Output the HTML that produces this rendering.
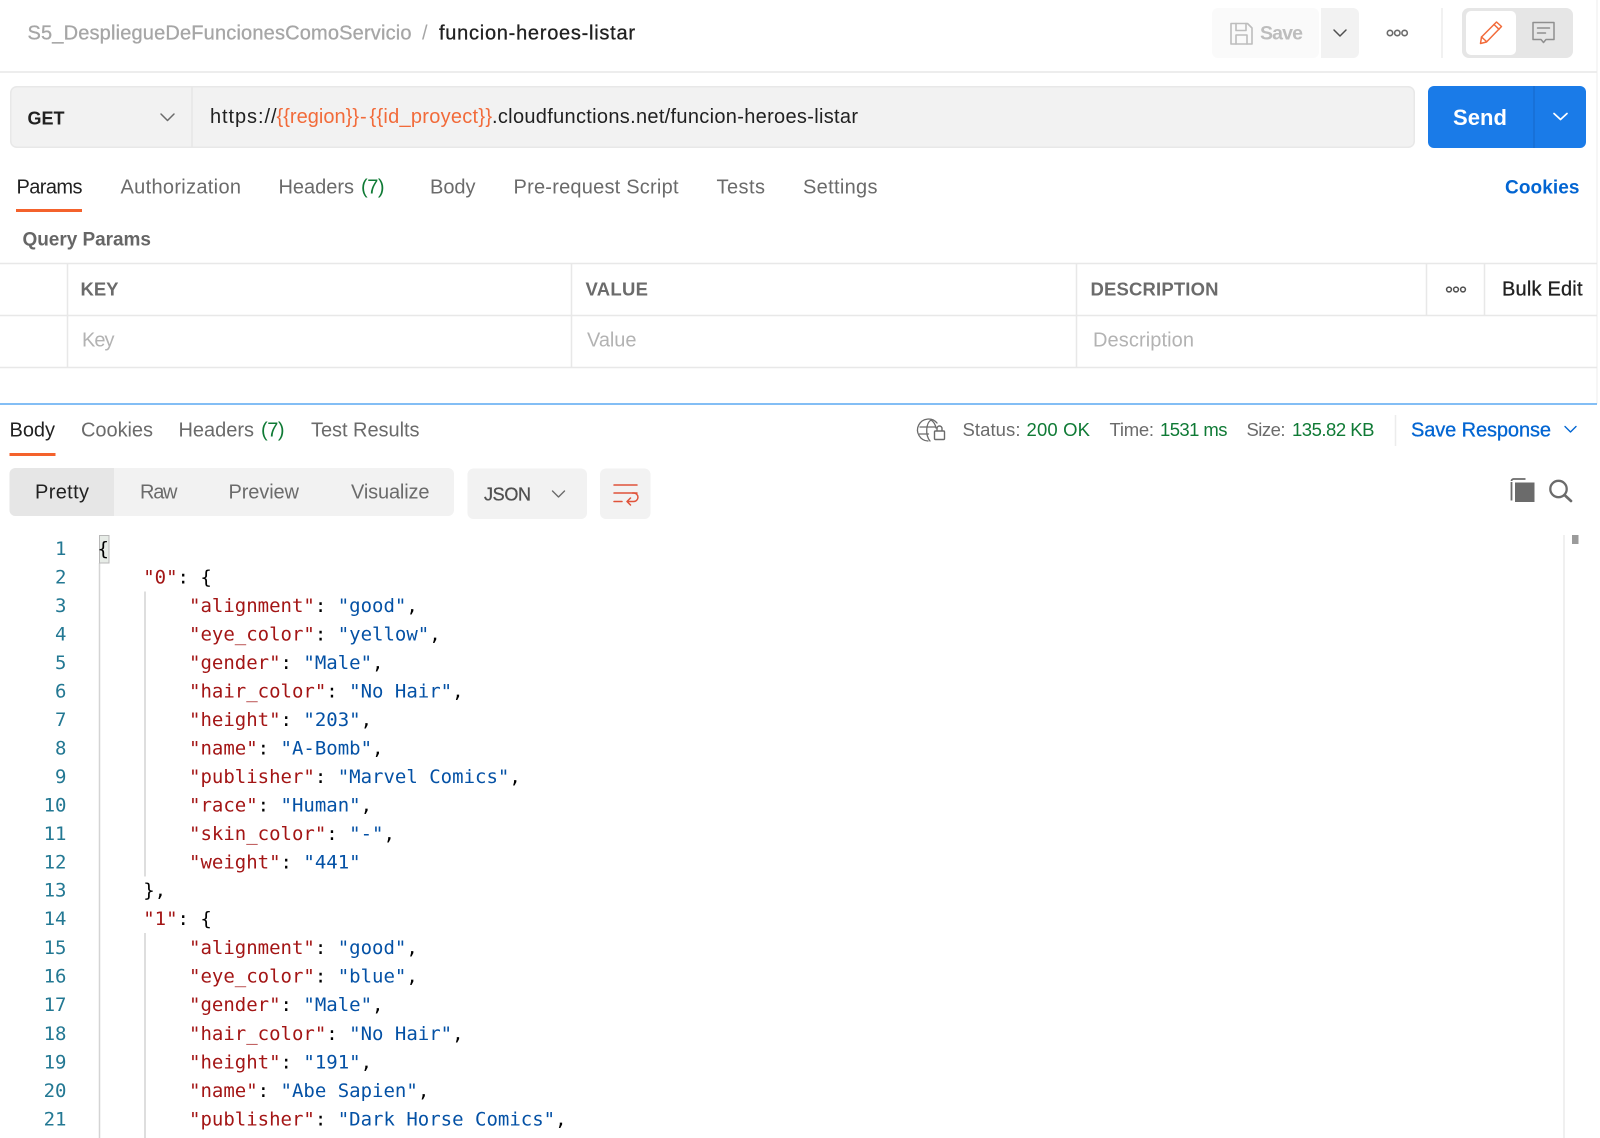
<!DOCTYPE html>
<html><head><meta charset="utf-8"><title>funcion-heroes-listar</title>
<style>
html,body{margin:0;padding:0;background:#fff;width:1600px;height:1138px;overflow:hidden}
svg{display:block}
text{font-family:"Liberation Sans",sans-serif;font-size:20px;white-space:pre;dominant-baseline:alphabetic}
.m{stroke:currentColor;stroke-width:.3}
.g{fill:#6b6b6b;color:#6b6b6b}
.d{fill:#212121;color:#212121}
.ok{fill:#0f7a35;color:#0f7a35}
.b{fill:#0265d2;color:#0265d2}
.ph{fill:#b3b3b3}
.s{font-size:18.5px}
.h{font-size:18.5px;font-weight:700}
.o{fill:#f26b3a}
.c text,text.c{font-family:"DejaVu Sans Mono",monospace;font-size:19px}
.c text{fill:#000}
.k{fill:#a31515}.v{fill:#0451a5}
.n text{font-family:"DejaVu Sans Mono",monospace;font-size:19px;fill:#237893;text-anchor:end}
.l{stroke:#e8e8e8;stroke-width:1.5;fill:none}
.i{fill:none;stroke-linecap:round;stroke-linejoin:round}
</style></head><body>
<svg width="1600" height="1138" viewBox="0 0 1600 1138" xmlns="http://www.w3.org/2000/svg">
<!-- header -->
<text x="27.500" y="39.500" textLength="384" class="m" style="fill:#a6a6a6;color:#a6a6a6">S5_DespliegueDeFuncionesComoServicio</text>
<text x="422" y="39.500" style="fill:#a6a6a6">/</text>
<text x="439" y="39.500" textLength="196" class="m d">funcion-heroes-listar</text>
<rect x="1212" y="8" width="107" height="50" rx="6" fill="#fafafa"/>
<path d="M1321 8h32a6 6 0 0 1 6 6v38a6 6 0 0 1-6 6h-32z" fill="#f2f2f2"/>
<g class="i" stroke="#bdbdbd" stroke-width="1.600"><path d="M1231 23.500h16.500l4.500 4.500v16h-21z"/><path d="M1236 23.500v7h10v-7"/><path d="M1236 44v-9h11v9"/></g>
<text x="1260" y="39.500" textLength="43" style="fill:#bdbdbd;font-weight:700;font-size:19.500px">Save</text>
<path class="i" d="M1334 30l6 6 6-6" stroke="#505050" stroke-width="1.500"/>
<g fill="none" stroke="#6b6b6b" stroke-width="1.600"><circle cx="1390" cy="33" r="2.700"/><circle cx="1397.300" cy="33" r="2.700"/><circle cx="1404.600" cy="33" r="2.700"/></g>
<path d="M1442 8v50" stroke="#ececec" stroke-width="1.500"/>
<rect x="1462" y="8" width="111" height="50" rx="7" fill="#e6e6e6"/>
<rect x="1466" y="11" width="50" height="44" rx="5" fill="#fff"/>
<g class="i" stroke="#f26b3a" stroke-width="1.500"><path d="M1480.500 43.500l1-6.500 15-15 5 4.500-15 15.500z"/><path d="M1494 24.500l5 4.800M1481.500 37l5 4.500"/></g>
<g class="i" stroke="#8f8f8f" stroke-width="1.500"><path d="M1533 22.500h21v17h-8l-2.500 3-2.500-3h-8z"/><path d="M1537.500 28h12M1537.500 33h8"/></g>
<path d="M0 72h1597" stroke="#ededed" stroke-width="2"/>
<path d="M1597 0v404" stroke="#ececec" stroke-width="1"/>
<!-- url bar -->
<rect x="10.750" y="86.750" width="1403.500" height="60.500" rx="6" fill="#f2f2f2" stroke="#e8e8e8" stroke-width="1.500"/>
<path d="M192 87v60" stroke="#e6e6e6" stroke-width="1.500"/>
<text x="27.500" y="124.500" class="d" style="font-weight:700;font-size:18px">GET</text>
<path class="i" d="M161 114l6.500 6.500 6.500-6.500" stroke="#6b6b6b" stroke-width="1.500"/>
<text x="210" y="123" textLength="66.500" class="d">https://</text>
<text x="276.500" y="123" textLength="82.500" class="o">{{region}}</text>
<text x="360" y="123" class="o">-</text>
<text x="369.500" y="123" textLength="122.500" class="o">{{id_proyect}}</text>
<text x="492" y="123" textLength="366" class="d">.cloudfunctions.net/funcion-heroes-listar</text>
<rect x="1428" y="86" width="158" height="62" rx="6" fill="#1a7be8"/>
<path d="M1534 86v62" stroke="#1667c8" stroke-width="1"/>
<text x="1453" y="125" textLength="54" style="fill:#fff;font-size:22px;font-weight:700">Send</text>
<path class="i" d="M1554 113.500l6.500 6 6.500-6" stroke="#fff" stroke-width="1.700"/>
<!-- request tabs -->
<text x="16.500" y="193.500" textLength="66" class="d">Params</text>
<rect x="16" y="209" width="66" height="3" fill="#f4622c"/>
<text x="120.500" y="193.500" textLength="120.500" class="g">Authorization</text>
<text x="278.500" y="193.500" textLength="75.500" class="g">Headers</text>
<text x="361" y="193.500" textLength="23.500" class="ok">(7)</text>
<text x="430" y="193.500" textLength="45.500" class="g">Body</text>
<text x="513.500" y="193.500" textLength="165" class="g">Pre-request Script</text>
<text x="716.500" y="193.500" textLength="48.500" class="g">Tests</text>
<text x="803" y="193.500" textLength="74.500" class="g">Settings</text>
<text x="1505" y="193.500" textLength="74.500" class="b" style="font-weight:700;font-size:19px">Cookies</text>
<text x="22.500" y="245.500" textLength="128.500" class="g" style="font-weight:700;fill:#666;font-size:19px">Query Params</text>
<!-- params table -->
<path class="l" d="M0 263.500h1597M0 315.500h1597M0 367.500h1597M67.500 263v105M571.500 263v105M1076.500 263v105M1426.500 263v52M1484.500 263v52"/>
<text x="80.500" y="295.500" textLength="38" class="g h">KEY</text>
<text x="585.500" y="295.500" textLength="62.500" class="g h">VALUE</text>
<text x="1090.500" y="295.500" textLength="128" class="g h">DESCRIPTION</text>
<g fill="none" stroke="#505050" stroke-width="1.500"><circle cx="1449" cy="289.500" r="2.400"/><circle cx="1456" cy="289.500" r="2.400"/><circle cx="1463" cy="289.500" r="2.400"/></g>
<text x="1502" y="295.500" textLength="80.500" class="m d">Bulk Edit</text>
<text x="82" y="346.500" textLength="32.500" class="ph">Key</text>
<text x="587" y="346.500" textLength="49.500" class="ph">Value</text>
<text x="1093" y="346.500" textLength="101" class="ph">Description</text>
<!-- response -->
<path d="M0 404h1597" stroke="#5aa9f2" stroke-width="1.500"/>
<text x="9.500" y="436.500" textLength="45.500" class="d">Body</text>
<rect x="9.500" y="453" width="46" height="3" fill="#f4622c"/>
<text x="81" y="436.500" textLength="72" class="g">Cookies</text>
<text x="178.500" y="436.500" textLength="75.500" class="g">Headers</text>
<text x="261" y="436.500" textLength="23.500" class="ok">(7)</text>
<text x="311" y="436.500" textLength="108.500" class="g">Test Results</text>
<g class="i" stroke="#6b6b6b" stroke-width="1.300"><path d="M928 441a11 11 0 1 1 9-18"/><path d="M931 420c-5 3-6 15-1 21M931 420c3 2 4.500 5 5 8M920 427h16M919.500 434h9"/></g>
<rect x="934.500" y="431" width="10" height="8.500" rx="1" fill="#fff" stroke="#6b6b6b" stroke-width="1.400"/><path d="M937 431v-2.500a2.500 2.500 0 0 1 5 0v2.500" fill="none" stroke="#6b6b6b" stroke-width="1.400"/>
<text x="962.500" y="436" textLength="58" class="g s">Status:</text>
<text x="1026.500" y="436" textLength="63.500" class="ok s">200 OK</text>
<text x="1109.500" y="436" textLength="44.500" class="g s">Time:</text>
<text x="1160" y="436" textLength="67.500" class="ok s">1531 ms</text>
<text x="1246.500" y="436" textLength="39" class="g s">Size:</text>
<text x="1292" y="436" textLength="82.500" class="ok s">135.82 KB</text>
<path d="M1395.500 415v31" stroke="#ececec" stroke-width="1.500"/>
<text x="1411" y="436.500" textLength="140" class="m b">Save Response</text>
<path class="i" d="M1565 426.500l5.500 5.500 5.500-5.500" stroke="#0265d2" stroke-width="1.400"/>
<!-- format bar -->
<rect x="9.500" y="468" width="444.500" height="48" rx="6" fill="#f2f2f2"/>
<path d="M114 468H15.500a6 6 0 0 0-6 6v36a6 6 0 0 0 6 6H114z" fill="#e6e6e6"/>
<text x="35" y="498.500" textLength="54" class="d">Pretty</text>
<text x="140" y="498.500" textLength="37.500" class="g">Raw</text>
<text x="228.500" y="498.500" textLength="70.500" class="g">Preview</text>
<text x="351" y="498.500" textLength="78.500" class="g">Visualize</text>
<rect x="467.500" y="468.500" width="119.500" height="50.500" rx="6" fill="#f2f2f2"/>
<text x="484" y="500.500" textLength="47" class="m" style="fill:#505050;color:#505050;font-size:18px">JSON</text>
<path class="i" d="M552.500 491l6 6 6-6" stroke="#6b6b6b" stroke-width="1.400"/>
<rect x="600" y="468.500" width="50.500" height="50.500" rx="6" fill="#f2f2f2"/>
<g class="i" stroke="#e0533a" stroke-width="1.500"><path d="M614 485h23M614 493h23M614 501.500h8"/><path d="M632.500 493h1.200a4.200 4.200 0 0 1 0 8.500h-6.500M630.500 498l-3.500 3.500 3.500 3.500"/></g>
<path d="M1511.500 482v18.500" stroke="#6b6b6b" stroke-width="1.800" fill="none"/><path d="M1511.500 481a2 2 0 0 1 2-2h12" stroke="#6b6b6b" stroke-width="1.800" fill="none"/><rect x="1515" y="482.500" width="19.500" height="19.500" fill="#6b6b6b"/>
<circle cx="1558.500" cy="489" r="8.200" fill="none" stroke="#6b6b6b" stroke-width="2.300"/><path d="M1564.500 495l6.500 6" stroke="#6b6b6b" stroke-width="2.700" stroke-linecap="round"/>
<!-- scrollbar -->
<path d="M1564 535v603" stroke="#ececec" stroke-width="1.500"/><rect x="1572" y="535" width="6.500" height="9" fill="#9b9b9b"/>
<!-- guides -->
<path d="M99.500 563v575M145 591.500v285M145 933v205" stroke="#d4d4d4" stroke-width="1.500" fill="none"/>
<rect x="99.500" y="535.500" width="9.500" height="27.500" fill="#e7ece7" stroke="#b8b8b8" stroke-width="1"/>
<!-- line numbers -->
<g class="n">
<text x="66.500" y="555">1</text><text x="66.500" y="583.500">2</text><text x="66.500" y="612">3</text><text x="66.500" y="640.600">4</text><text x="66.500" y="669.100">5</text><text x="66.500" y="697.600">6</text><text x="66.500" y="726.100">7</text><text x="66.500" y="754.600">8</text><text x="66.500" y="783.200">9</text><text x="66.500" y="811.700">10</text><text x="66.500" y="840.200">11</text><text x="66.500" y="868.700">12</text><text x="66.500" y="896.700">13</text><text x="66.500" y="925.200">14</text><text x="66.500" y="953.800">15</text><text x="66.500" y="982.500">16</text><text x="66.500" y="1011">17</text><text x="66.500" y="1039.800">18</text><text x="66.500" y="1068.400">19</text><text x="66.500" y="1096.900">20</text><text x="66.500" y="1125.400">21</text>
</g>
<!-- code -->
<g class="c">
<text x="97.500" y="555">{</text>
<text x="143.200" y="583.500"><tspan class="k">"0"</tspan>: {</text>
<text x="189" y="612"><tspan class="k">"alignment"</tspan>: <tspan class="v">"good"</tspan>,</text>
<text x="189" y="640.600"><tspan class="k">"eye_color"</tspan>: <tspan class="v">"yellow"</tspan>,</text>
<text x="189" y="669.100"><tspan class="k">"gender"</tspan>: <tspan class="v">"Male"</tspan>,</text>
<text x="189" y="697.600"><tspan class="k">"hair_color"</tspan>: <tspan class="v">"No Hair"</tspan>,</text>
<text x="189" y="726.100"><tspan class="k">"height"</tspan>: <tspan class="v">"203"</tspan>,</text>
<text x="189" y="754.600"><tspan class="k">"name"</tspan>: <tspan class="v">"A-Bomb"</tspan>,</text>
<text x="189" y="783.200"><tspan class="k">"publisher"</tspan>: <tspan class="v">"Marvel Comics"</tspan>,</text>
<text x="189" y="811.700"><tspan class="k">"race"</tspan>: <tspan class="v">"Human"</tspan>,</text>
<text x="189" y="840.200"><tspan class="k">"skin_color"</tspan>: <tspan class="v">"-"</tspan>,</text>
<text x="189" y="868.700"><tspan class="k">"weight"</tspan>: <tspan class="v">"441"</tspan></text>
<text x="143.200" y="896.700">},</text>
<text x="143.200" y="925.200"><tspan class="k">"1"</tspan>: {</text>
<text x="189" y="953.800"><tspan class="k">"alignment"</tspan>: <tspan class="v">"good"</tspan>,</text>
<text x="189" y="982.500"><tspan class="k">"eye_color"</tspan>: <tspan class="v">"blue"</tspan>,</text>
<text x="189" y="1011"><tspan class="k">"gender"</tspan>: <tspan class="v">"Male"</tspan>,</text>
<text x="189" y="1039.800"><tspan class="k">"hair_color"</tspan>: <tspan class="v">"No Hair"</tspan>,</text>
<text x="189" y="1068.400"><tspan class="k">"height"</tspan>: <tspan class="v">"191"</tspan>,</text>
<text x="189" y="1096.900"><tspan class="k">"name"</tspan>: <tspan class="v">"Abe Sapien"</tspan>,</text>
<text x="189" y="1125.400"><tspan class="k">"publisher"</tspan>: <tspan class="v">"Dark Horse Comics"</tspan>,</text>
</g>
</svg>
</body></html>
